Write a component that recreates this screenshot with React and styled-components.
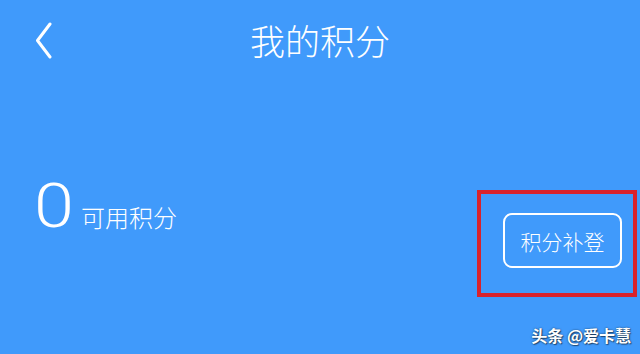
import React from "react";
import styled, { createGlobalStyle } from "styled-components";

const GlobalStyle = createGlobalStyle`
  html, body {
    margin: 0;
    padding: 0;
    background: #409afb;
  }
  body {
    font-family: "Noto Sans CJK SC", "Noto Sans", sans-serif;
  }
`;

const Page = styled.div`
  position: relative;
  width: 640px;
  height: 354px;
  overflow: hidden;
  background: #409afb;
  color: #fff;
  display: flex;
  flex-direction: column;
`;

const Header = styled.header`
  height: 80px;
  display: grid;
  grid-template-columns: 1fr auto 1fr;
  align-items: center;
`;

const BackButton = styled.button`
  justify-self: start;
  margin-left: 35px;
  padding: 0;
  border: 0;
  background: none;
  display: flex;
  width: 17px;
  height: 37px;
`;

const Title = styled.h1`
  margin: 0;
  font-size: 35px;
  font-weight: 300;
  line-height: 40px;
  letter-spacing: 0;
`;

const Body = styled.main`
  display: flex;
  justify-content: space-between;
  align-items: flex-start;
  padding: 0 3px 0 34px;
`;

const Score = styled.div`
  margin-top: ${(p) => p.$offset}px;
  display: flex;
  align-items: baseline;
  gap: 7px;
`;

const ScoreValue = styled.span`
  display: inline-block;
  width: 40px;
  font-family: Roboto, "Noto Sans", sans-serif;
  font-weight: 300;
  font-size: 61px;
  line-height: 60px;
  transform: scaleX(1.18);
  transform-origin: left center;
`;

const ScoreLabel = styled.span`
  font-size: 24px;
  font-weight: 300;
`;

const Highlight = styled.div`
  margin-top: ${(p) => p.$offset}px;
  border: 4px solid #d8222c;
  padding: 19px 11px 25px 22px;
`;

const ActionButton = styled.button`
  width: 119px;
  height: 55px;
  box-sizing: border-box;
  border: 2px solid #fff;
  border-radius: 9px;
  background: transparent;
  color: #fff;
  font-family: "Noto Sans CJK SC", sans-serif;
  font-weight: 300;
  font-size: 21px;
  padding: 0;
  cursor: pointer;
`;

const Watermark = styled.div`
  position: absolute;
  right: 9px;
  bottom: 9px;
  font-size: 16px;
  font-weight: 700;
  line-height: 20px;
  color: #fff;
  text-shadow: 0 0 2px rgba(0, 0, 0, 0.6), 1px 1px 1px rgba(0, 0, 0, 0.45);
`;

const BackIcon = () => (
  <svg width="17" height="37" viewBox="0 0 17 37" fill="none">
    <path
      d="M15 2 L2.5 18.5 L15 35"
      stroke="#fff"
      strokeWidth="3"
      strokeLinecap="round"
      strokeLinejoin="round"
    />
  </svg>
);

export default function App() {
  return (
    <>
      <GlobalStyle />
      <Page>
        <Header>
          <BackButton aria-label="返回">
            <BackIcon />
          </BackButton>
          <Title>我的积分</Title>
          <div />
        </Header>
        <Body>
          <Score $offset={96}>
            <ScoreValue>0</ScoreValue>
            <ScoreLabel>可用积分</ScoreLabel>
          </Score>
          <Highlight $offset={110}>
            <ActionButton>积分补登</ActionButton>
          </Highlight>
        </Body>
        <Watermark>头条 @爱卡慧</Watermark>
      </Page>
    </>
  );
}
